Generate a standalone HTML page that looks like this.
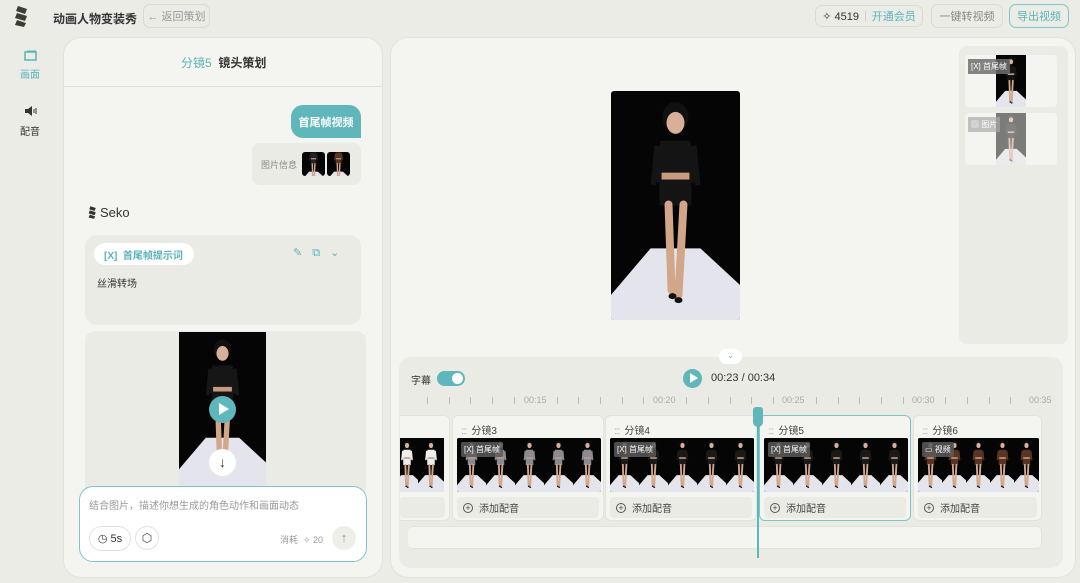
<!DOCTYPE html>
<html><head><meta charset="utf-8">
<style>
*{box-sizing:border-box;margin:0;padding:0}
body{width:1080px;height:583px;overflow:hidden;background:#ecece7;font-family:"Liberation Sans","Noto Sans CJK SC",sans-serif;color:#333;position:relative}
.a{position:absolute}
.teal{color:#5ab3b8}
.btn{position:absolute;border:1px solid #dadad4;border-radius:7px;background:#ecece7;font-size:11px;color:#999;display:flex;align-items:center;justify-content:center}
.panel{position:absolute;background:#f4f4f0;border:1px solid #e2e2dc;border-radius:18px}
.clip{position:absolute;top:415px;height:106px;background:#f4f4f0;border:1px solid #e3e3dd;border-radius:6px;overflow:hidden}
.clip .h{position:absolute;left:8px;top:6px;font-size:10px;color:#444}
.clip .h b{font-weight:normal;color:#aaa;margin-right:5px;letter-spacing:-1px}
.clip .s{position:absolute;left:4px;right:4px;top:22px;height:54px;background:#000;overflow:hidden;border-radius:2px}
.clip .ad{position:absolute;left:4px;right:4px;top:81px;height:21px;background:#ebebe6;border-radius:4px;font-size:10px;color:#444;display:flex;align-items:center;padding-left:6px}
.ad i{display:inline-block;width:10px;height:10px;border:1px solid #555;border-radius:50%;margin-right:6px;font-style:normal;font-size:9px;line-height:8px;text-align:center}
.tag{position:absolute;left:2px;top:2px;background:rgba(90,90,90,.85);color:#fff;font-size:8px;padding:2px 3px;border-radius:2px}
.tick{position:absolute;top:397px;width:1px;height:7px;background:#bbb}
.lbl{position:absolute;top:395px;font-size:9px;color:#aaa}
</style></head><body>
<svg width="0" height="0" style="position:absolute">
<defs>
<symbol id="scn" viewBox="0 0 130 230" preserveAspectRatio="xMidYMid slice">
<rect width="130" height="230" fill="#050505"/>
<polygon points="0,205 40,158 90,158 130,195 130,230 0,230" fill="#e4e4ec"/>
<ellipse cx="65" cy="26" rx="13" ry="15" fill="#111"/>
<ellipse cx="65" cy="32" rx="9" ry="11" fill="#d8b09a"/>
<path d="M50 50 L80 50 L86 88 L84 92 L46 92 L44 88Z" fill="currentColor"/>
<rect x="51" y="82" width="28" height="7" fill="#c89a80"/>
<rect x="49" y="89" width="32" height="26" fill="currentColor"/>
<path d="M44 54 L40 94 L45 95 L50 56Z M86 54 L90 94 L85 95 L80 56Z" fill="currentColor"/>
<path d="M58 114 L61 200 M73 114 L68 205" stroke="#d2a688" stroke-width="8" stroke-linecap="round"/>
<ellipse cx="62" cy="206" rx="4" ry="3" fill="#111"/><ellipse cx="68" cy="210" rx="4" ry="3" fill="#111"/>
</symbol>
</defs></svg>

<!-- top bar -->
<svg class="a" style="left:14px;top:6px" width="15" height="21" viewBox="0 0 15 21"><path d="M4 0 L13 3 L11 8 L2 5Z M3 7 L13 10 L11 15 L1 12Z M3 14 L12 17 L10 21 L1 19Z" fill="#3b3d33"/></svg>
<div class="a" style="left:53px;top:10px;font-size:12px;font-weight:bold;color:#333">动画人物变装秀</div>
<div class="btn" style="left:143px;top:4px;width:67px;height:24px">← 返回策划</div>
<div class="btn" style="left:815px;top:5px;width:108px;height:22px;color:#333;font-size:11px">✧ 4519 <span style="color:#ccc;margin:0 5px">|</span><span class="teal">开通会员</span></div>
<div class="btn" style="left:931px;top:4px;width:72px;height:24px;font-size:11px;color:#888">一键转视频</div>
<div class="btn" style="left:1009px;top:4px;width:60px;height:24px;border-color:#7ec5c9;color:#5ab3b8">导出视频</div>

<!-- left nav -->
<svg class="a" style="left:24px;top:50px" width="13" height="11"><rect x="1" y="2" width="11" height="8" fill="none" stroke="#5ab3b8" stroke-width="1.5"/><rect x="3" y="0.5" width="9" height="1.5" fill="#5ab3b8"/></svg>
<div class="a teal" style="left:20px;top:66px;font-size:10px">画面</div>
<svg class="a" style="left:24px;top:105px" width="14" height="12"><path d="M1 4 H4 L8 1 V11 L4 8 H1Z" fill="#333"/><path d="M10 4 V8 M12 3 V9" stroke="#333"/></svg>
<div class="a" style="left:20px;top:123px;font-size:10px;color:#333">配音</div>

<!-- left panel -->
<div class="panel" style="left:63px;top:37px;width:320px;height:541px"></div>
<div class="a" style="left:64px;top:86px;width:318px;height:1px;background:#e0e0da"></div>
<div class="a" style="left:181px;top:54px;font-size:12px"><span class="teal">分镜5</span> &nbsp;<b style="font-weight:bold;color:#333">镜头策划</b></div>
<div class="a" style="left:291px;top:105px;width:70px;height:33px;background:#5fb6bb;border-radius:12px 12px 0 12px;color:#fff;font-size:11px;font-weight:bold;display:flex;align-items:center;justify-content:center">首尾帧视频</div>
<div class="a" style="left:252px;top:143px;width:109px;height:42px;background:#ebebe6;border-radius:8px"></div>
<div class="a" style="left:261px;top:158px;font-size:9px;color:#888">图片信息</div>
<svg class="a" style="left:302px;top:152px;border-radius:3px" width="23" height="24" color="#222"><use href="#scn" width="23" height="24"/></svg>
<svg class="a" style="left:327px;top:152px;border-radius:3px" width="23" height="24" color="#5a3422"><use href="#scn" width="23" height="24"/></svg>
<svg class="a" style="left:88px;top:206px" width="9" height="13" viewBox="0 0 15 21"><path d="M4 0 L13 3 L11 8 L2 5Z M3 7 L13 10 L11 15 L1 12Z M3 14 L12 17 L10 21 L1 19Z" fill="#333"/></svg>
<div class="a" style="left:100px;top:205px;font-size:13px;color:#333">Seko</div>
<div class="a" style="left:85px;top:235px;width:276px;height:90px;background:#ebebe6;border-radius:12px"></div>
<div class="a teal" style="left:94px;top:243px;width:100px;height:22px;background:#fff;border-radius:11px;font-size:10px;font-weight:bold;display:flex;align-items:center;padding-left:10px">[X] &nbsp;首尾帧提示词</div>
<div class="a teal" style="left:293px;top:246px;font-size:11px;letter-spacing:10px">✎⧉⌄</div>
<div class="a" style="left:97px;top:275px;font-size:10px;color:#333">丝滑转场</div>
<div class="a" style="left:85px;top:331px;width:281px;height:160px;background:#ebebe6;border-radius:10px 10px 0 0"></div>
<svg class="a" style="left:179px;top:332px" width="87" height="154" color="#161616"><use href="#scn" width="87" height="154"/></svg>
<div class="a" style="left:209px;top:396px;width:27px;height:27px;border-radius:50%;background:#5fb6bb"></div>
<div class="a" style="left:219px;top:403px;width:0;height:0;border-left:10px solid #fff;border-top:6.5px solid transparent;border-bottom:6.5px solid transparent"></div>
<div class="a" style="left:209px;top:449px;width:27px;height:27px;border-radius:50%;background:#fff;text-align:center;font-size:14px;line-height:27px;color:#333">↓</div>
<div class="a" style="left:79px;top:486px;width:288px;height:76px;background:#fff;border:1px solid #7ec5c9;border-radius:14px"></div>
<div class="a" style="left:89px;top:497px;font-size:10px;color:#999">结合图片，描述你想生成的角色动作和画面动态</div>
<div class="a" style="left:89px;top:526px;width:42px;height:25px;border:1px solid #e2e2e2;border-radius:13px;font-size:11px;color:#333;display:flex;align-items:center;justify-content:center">◷ 5s</div>
<div class="a" style="left:135px;top:526px;width:24px;height:24px;border:1px solid #e2e2e2;border-radius:50%;font-size:12px;text-align:center;line-height:22px;color:#444">⬡</div>
<div class="a" style="left:280px;top:533px;font-size:9px;color:#999">消耗 &nbsp;✧ 20</div>
<div class="a" style="left:332px;top:526px;width:24px;height:24px;background:#efefea;border-radius:50%;font-size:13px;text-align:center;line-height:24px;color:#999">↑</div>

<!-- right panel -->
<div class="panel" style="left:390px;top:37px;width:686px;height:541px"></div>
<svg class="a" style="left:611px;top:91px;border-radius:3px" width="129" height="229" color="#141414"><use href="#scn" width="129" height="229"/></svg>
<div class="a" style="left:959px;top:46px;width:109px;height:298px;background:#ebebe6;border-radius:8px"></div>
<div class="a" style="left:965px;top:55px;width:92px;height:52px;background:#f4f4f0;border-radius:4px"></div>
<svg class="a" style="left:996px;top:55px" width="30" height="52" color="#151515"><use href="#scn" width="30" height="52"/></svg>
<div class="a" style="left:968px;top:59px;background:rgba(110,110,110,.85);color:#fff;font-size:8px;padding:2px 3px">[X] 首尾帧</div>
<div class="a" style="left:965px;top:113px;width:92px;height:52px;background:#f4f4f0;border-radius:4px"></div>
<svg class="a" style="left:996px;top:113px;opacity:.5" width="30" height="52" color="#151515"><use href="#scn" width="30" height="52"/></svg>
<div class="a" style="left:968px;top:117px;background:rgba(170,170,170,.7);color:#fff;font-size:8px;padding:2px 3px">▨ 图片</div>

<!-- timeline -->
<div class="a" style="left:399px;top:357px;width:664px;height:211px;background:#ebebe6;border-radius:12px"></div>
<div class="a" style="left:719px;top:349px;width:23px;height:15px;background:#fff;border-radius:8px;font-size:9px;text-align:center;color:#5ab3b8;line-height:13px">⌄</div>
<div class="a" style="left:411px;top:372px;font-size:10px;color:#333">字幕</div>
<div class="a" style="left:437px;top:371px;width:28px;height:15px;background:#5fb6bb;border-radius:8px"></div>
<div class="a" style="left:452px;top:373px;width:11px;height:11px;background:#fff;border-radius:50%"></div>
<div class="a" style="left:683px;top:369px;width:19px;height:19px;background:#5fb6bb;border-radius:50%"></div>
<div class="a" style="left:690px;top:373px;border-left:8px solid #fff;border-top:5px solid transparent;border-bottom:5px solid transparent"></div>
<div class="a" style="left:711px;top:372px;font-size:11px;color:#333">00:23 / 00:34</div>
<div class="tick" style="left:427px"></div><div class="tick" style="left:449px"></div><div class="tick" style="left:470px"></div><div class="tick" style="left:492px"></div><div class="tick" style="left:514px"></div>
<div class="lbl" style="left:524px">00:15</div>
<div class="tick" style="left:557px"></div><div class="tick" style="left:578px"></div><div class="tick" style="left:600px"></div><div class="tick" style="left:622px"></div><div class="tick" style="left:643px"></div>
<div class="lbl" style="left:653px">00:20</div>
<div class="tick" style="left:686px"></div><div class="tick" style="left:708px"></div><div class="tick" style="left:730px"></div><div class="tick" style="left:751px"></div><div class="tick" style="left:773px"></div>
<div class="lbl" style="left:782px">00:25</div>
<div class="tick" style="left:816px"></div><div class="tick" style="left:838px"></div><div class="tick" style="left:859px"></div><div class="tick" style="left:881px"></div><div class="tick" style="left:903px"></div>
<div class="lbl" style="left:912px">00:30</div>
<div class="tick" style="left:945px"></div><div class="tick" style="left:967px"></div><div class="tick" style="left:989px"></div><div class="tick" style="left:1010px"></div>
<div class="lbl" style="left:1029px">00:35</div>

<div class="clip" style="left:400px;width:50px;border-left:none;border-radius:0 6px 6px 0">
<svg class="a" style="left:0;top:22px" width="46" height="54" color="#eee"><use href="#scn" x="-6" width="26" height="54"/><use href="#scn" x="18" width="26" height="54"/></svg>
<div class="ad" style="left:0"></div></div>

<div class="clip" style="left:452px;width:152px"><div class="h"><b>:::</b>分镜3</div>
<svg class="s" width="144" height="54" color="#8a8a90"><use href="#scn" width="29" height="54"/><use href="#scn" x="29" width="29" height="54"/><use href="#scn" x="58" width="29" height="54"/><use href="#scn" x="87" width="29" height="54"/><use href="#scn" x="116" width="29" height="54"/></svg>
<div class="tag" style="left:8px;top:26px">[X] 首尾帧</div>
<div class="ad"><i>+</i>添加配音</div></div>

<div class="clip" style="left:605px;width:152px"><div class="h"><b>:::</b>分镜4</div>
<svg class="s" width="144" height="54" color="#1a1a1a"><use href="#scn" width="29" height="54"/><use href="#scn" x="29" width="29" height="54"/><use href="#scn" x="58" width="29" height="54"/><use href="#scn" x="87" width="29" height="54"/><use href="#scn" x="116" width="29" height="54"/></svg>
<div class="tag" style="left:8px;top:26px">[X] 首尾帧</div>
<div class="ad"><i>+</i>添加配音</div></div>

<div class="clip" style="left:759px;width:152px;border-color:#7ec5c9"><div class="h"><b>:::</b>分镜5</div>
<svg class="s" width="144" height="54" color="#1a1a1a"><use href="#scn" width="29" height="54"/><use href="#scn" x="29" width="29" height="54"/><use href="#scn" x="58" width="29" height="54"/><use href="#scn" x="87" width="29" height="54"/><use href="#scn" x="116" width="29" height="54"/></svg>
<div class="tag" style="left:8px;top:26px">[X] 首尾帧</div>
<div class="ad"><i>+</i>添加配音</div></div>

<div class="clip" style="left:913px;width:129px"><div class="h"><b>:::</b>分镜6</div>
<svg class="s" width="121" height="54" color="#5a3422"><use href="#scn" width="25" height="54"/><use href="#scn" x="24" width="25" height="54"/><use href="#scn" x="48" width="25" height="54"/><use href="#scn" x="72" width="25" height="54"/><use href="#scn" x="96" width="25" height="54"/></svg>
<div class="tag" style="left:8px;top:26px">▭ 视频</div>
<div class="ad"><i>+</i>添加配音</div></div>

<div class="a" style="left:408px;top:526px;width:634px;height:23px;background:#f4f4f0;border:1px solid #e3e3dd;border-radius:5px;border-left:none"></div>
<div class="a" style="left:757px;top:420px;width:2px;height:138px;background:#5fb6bb"></div>
<div class="a" style="left:753px;top:407px;width:10px;height:20px;background:#5fb6bb;border-radius:3px 3px 5px 5px"></div>
</body></html>
